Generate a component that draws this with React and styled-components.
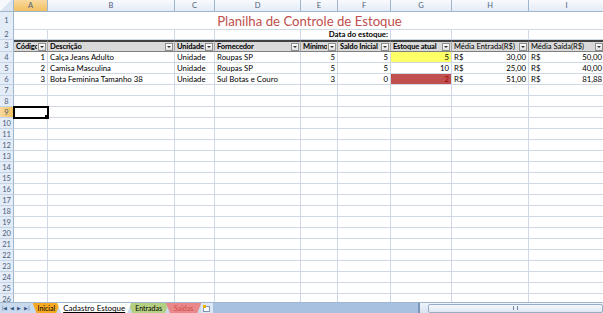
import React from "react";
import styled, { createGlobalStyle, css } from "styled-components";

// layout constants
const COLS = [
  { key: "A", w: 34 },
  { key: "B", w: 127 },
  { key: "C", w: 40 },
  { key: "D", w: 86 },
  { key: "E", w: 37 },
  { key: "F", w: 53 },
  { key: "G", w: 61 },
  { key: "H", w: 77 },
  { key: "I", w: 76 },
];
const template = `14px ${COLS.map((c) => c.w + "px").join(" ")}`;
const GRID = "#d0d7e5";
const FONT = `Lato, "Open Sans", sans-serif`;

const headers = [
  { t: "Código" },
  { t: "Descrição" },
  { t: "Unidade" },
  { t: "Fornecedor" },
  { t: "Mínimo" },
  { t: "Saldo Inicial" },
  { t: "Estoque atual" },
  { t: "Média Entrada(R$)", light: true },
  { t: "Média Saída(R$)", light: true },
];

const items = [
  { id: 1, desc: "Calça Jeans Adulto", un: "Unidade", forn: "Roupas SP", min: 5, ini: 5, atual: 5, status: "warn", ent: "30,00", sai: "50,00" },
  { id: 2, desc: "Camisa Masculina", un: "Unidade", forn: "Roupas SP", min: 5, ini: 5, atual: 10, status: "ok", ent: "25,00", sai: "40,00" },
  { id: 3, desc: "Bota Feminina Tamanho 38", un: "Unidade", forn: "Sul Botas e Couro", min: 3, ini: 0, atual: 2, status: "low", ent: "51,00", sai: "81,88" },
];

const GlobalStyle = createGlobalStyle`
  html, body { margin: 0; padding: 0; background: #fff; }
  body { width: 603px; height: 313px; overflow: hidden; font-family: ${FONT}; }
`;

const Window = styled.div`
  width: 603px;
  height: 313px;
  display: flex;
  flex-direction: column;
  overflow: hidden;
`;

const Sheet = styled.div`
  flex: 1;
  overflow: hidden;
`;

const Row = styled.div`
  display: grid;
  grid-template-columns: ${template};
  height: ${(p) => p.h || 11}px;
`;

const HeadCell = styled.div`
  box-sizing: border-box;
  border-right: 1px solid #9eb6ce;
  border-bottom: 1px solid #9eb6ce;
  background: ${(p) =>
    p.active
      ? "linear-gradient(#f9d99f, #f1c15f)"
      : "linear-gradient(#f8fafd, #e4ecf7)"};
  color: #4c607a;
  font-size: 7.5px;
  display: flex;
  align-items: center;
  justify-content: center;
`;

const Corner = styled(HeadCell)`
  background: linear-gradient(135deg, #f4f7fb 50%, #dbe5f1 50%);
`;

const RowNum = styled.div`
  box-sizing: border-box;
  border-right: 1px solid #9eb6ce;
  border-bottom: 1px solid #c5d3e6;
  background: ${(p) =>
    p.active ? "linear-gradient(90deg, #f9d99f, #f1c15f)" : "#e4ecf7"};
  color: #4c607a;
  font-size: 7.5px;
  display: flex;
  align-items: center;
  justify-content: center;
`;

const Cell = styled.div`
  box-sizing: border-box;
  border-right: 1px solid ${GRID};
  border-bottom: 1px solid ${GRID};
  font-size: 7.8px;
  color: #000;
  padding: 0 2px;
  display: flex;
  align-items: center;
  justify-content: ${(p) => (p.right ? "flex-end" : "flex-start")};
  white-space: nowrap;
  overflow: ${(p) => (p.spill ? "visible" : "hidden")};
  position: relative;
  background: ${(p) => p.bg || "transparent"};
  ${(p) =>
    p.selected &&
    css`
      outline: 2px solid #000;
      outline-offset: -1px;
      z-index: 2;
    `}
`;

const Handle = styled.span`
  position: absolute;
  right: -3px;
  bottom: -3px;
  width: 4px;
  height: 4px;
  background: #000;
  border: 1px solid #fff;
`;

const TitleCell = styled.div`
  grid-column: 2 / span 9;
  border-bottom: 1px solid ${GRID};
  display: flex;
  align-items: center;
  justify-content: center;
  color: #c0504d;
  font-size: 13.2px;
  padding-top: 1px;
`;

const Label = styled.span`
  font-weight: bold;
  font-size: 7.8px;
`;

const HdrCell = styled.div`
  box-sizing: border-box;
  background: #d9d9d9;
  border-top: 2px solid #404040;
  border-bottom: 1px solid #7f7f7f;
  border-right: 1px solid ${(p) => (p.light ? "#7f7f7f" : "#a6a6a6")};
  font-size: 7.5px;
  letter-spacing: ${(p) => (p.light ? "0" : "-0.15px")};
  font-weight: ${(p) => (p.light ? "normal" : "bold")};
  display: flex;
  align-items: center;
  padding: 0 1px 0 2px;
  overflow: hidden;
  white-space: nowrap;
  gap: 1px;
`;

const HdrText = styled.span`
  flex: 1;
  overflow: hidden;
`;

const Filter = styled.span`
  flex: none;
  width: 8px;
  height: 8px;
  box-sizing: border-box;
  border: 1px solid #8f8f8f;
  background: linear-gradient(#ffffff, #e0e0e0);
  display: flex;
  align-items: center;
  justify-content: center;
  &::after {
    content: "";
    border-left: 2px solid transparent;
    border-right: 2px solid transparent;
    border-top: 2px solid #333;
  }
`;

const Money = styled.span`
  flex: 1;
  display: flex;
  justify-content: space-between;
`;

const TabBar = styled.div`
  height: 10px;
  flex: none;
  display: flex;
  align-items: stretch;
  background: #c9d9ee;
  border-top: 1px solid #9eb6ce;
  font-size: 7px;
`;

const Nav = styled.div`
  display: flex;
  align-items: center;
  gap: 3px;
  padding: 0 3px 0 2px;
  color: #3b5a86;
  font-size: 5px;
`;

const Tab = styled.div`
  padding: 0 ${(p) => p.pad || 5}px;
  margin-right: -3px;
  display: flex;
  align-items: center;
  background: ${(p) => p.bg};
  color: ${(p) => p.color || "#000"};
  clip-path: polygon(0 0, 100% 0, calc(100% - 4px) 100%, 4px 100%);
  ${(p) =>
    p.active &&
    css`
      text-decoration: underline;
      z-index: 1;
      font-size: 8px;
    `}
`;

const NewSheet = styled.div`
  width: 12px;
  display: flex;
  align-items: center;
  justify-content: center;
  margin-left: 3px;
  background: #dfe8f4;
`;

const Spacer = styled.div`
  flex: 1;
  background: #a9c1e0;
`;

const Scroll = styled.div`
  width: 183px;
  display: flex;
  align-items: center;
  background: linear-gradient(#eef3fa, #d8e3f1);
  border-left: 2px solid #7d95b8;
`;

const Thumb = styled.div`
  margin-left: 8px;
  flex: 1;
  height: 7px;
  border: 1px solid #98acc6;
  border-radius: 2px;
  background: linear-gradient(#f4f7fb, #dfe7f2);
  display: flex;
  justify-content: center;
  align-items: center;
  &::after {
    content: "";
    width: 3px;
    height: 4px;
    border-left: 1px solid #6f87a8;
    border-right: 1px solid #6f87a8;
  }
`;

const statusBg = { warn: "#ffff66", low: "#c0504d", ok: "transparent" };
const statusColor = { warn: "#000", low: "#9c0006", ok: "#000" };

const App = () => {
  const emptyRows = [];
  for (let r = 7; r <= 26; r++) emptyRows.push(r);

  return (
    <Window>
      <GlobalStyle />
      <Sheet>
        <Row h={12}>
          <Corner />
          {COLS.map((c) => (
            <HeadCell key={c.key} active={c.key === "A"}>
              {c.key}
            </HeadCell>
          ))}
        </Row>

        <Row h={17}>
          <RowNum>1</RowNum>
          <TitleCell>Planilha de Controle de Estoque</TitleCell>
        </Row>

        <Row h={11}>
          <RowNum>2</RowNum>
          {COLS.map((c) => (
            <Cell key={c.key} right spill={c.key === "F"}>
              {c.key === "F" ? <Label>Data do estoque:</Label> : null}
            </Cell>
          ))}
        </Row>

        <Row h={12}>
          <RowNum>3</RowNum>
          {headers.map((h) => (
            <HdrCell key={h.t} light={h.light}>
              <HdrText>{h.t}</HdrText>
              <Filter />
            </HdrCell>
          ))}
        </Row>

        {items.map((it, i) => (
          <Row key={it.id}>
            <RowNum>{i + 4}</RowNum>
            <Cell right>{it.id}</Cell>
            <Cell>{it.desc}</Cell>
            <Cell>{it.un}</Cell>
            <Cell>{it.forn}</Cell>
            <Cell right>{it.min}</Cell>
            <Cell right>{it.ini}</Cell>
            <Cell
              right
              bg={statusBg[it.status]}
              style={{ color: statusColor[it.status] }}
            >
              {it.atual}
            </Cell>
            <Cell>
              <Money>
                <span>R$</span>
                <span>{it.ent}</span>
              </Money>
            </Cell>
            <Cell>
              <Money>
                <span>R$</span>
                <span>{it.sai}</span>
              </Money>
            </Cell>
          </Row>
        ))}

        {emptyRows.map((r) => (
          <Row key={r}>
            <RowNum active={r === 9}>{r}</RowNum>
            {COLS.map((c) => (
              <Cell key={c.key} selected={r === 9 && c.key === "A"}>
                {r === 9 && c.key === "A" ? <Handle /> : null}
              </Cell>
            ))}
          </Row>
        ))}
      </Sheet>

      <TabBar>
        <Nav>
          <span>|◀</span>
          <span>◀</span>
          <span>▶</span>
          <span>▶|</span>
        </Nav>
        <Tab bg="#f6a823">Inicial</Tab>
        <Tab bg="#ffffff" active pad={6}>
          Cadastro Estoque
        </Tab>
        <Tab bg="#b5cf82" pad={7}>
          Entradas
        </Tab>
        <Tab bg="#e8888a" color="#d24a4a" pad={8}>
          Saídas
        </Tab>
        <NewSheet>
          <svg width="8" height="7" viewBox="0 0 8 7">
            <rect x="0.5" y="1.5" width="6" height="5" fill="#fff" stroke="#7d95b8" />
            <rect x="0" y="0" width="3" height="3" fill="#f0b000" />
          </svg>
        </NewSheet>
        <Spacer />
        <Scroll>
          <Thumb />
        </Scroll>
      </TabBar>
    </Window>
  );
};

export default App;
